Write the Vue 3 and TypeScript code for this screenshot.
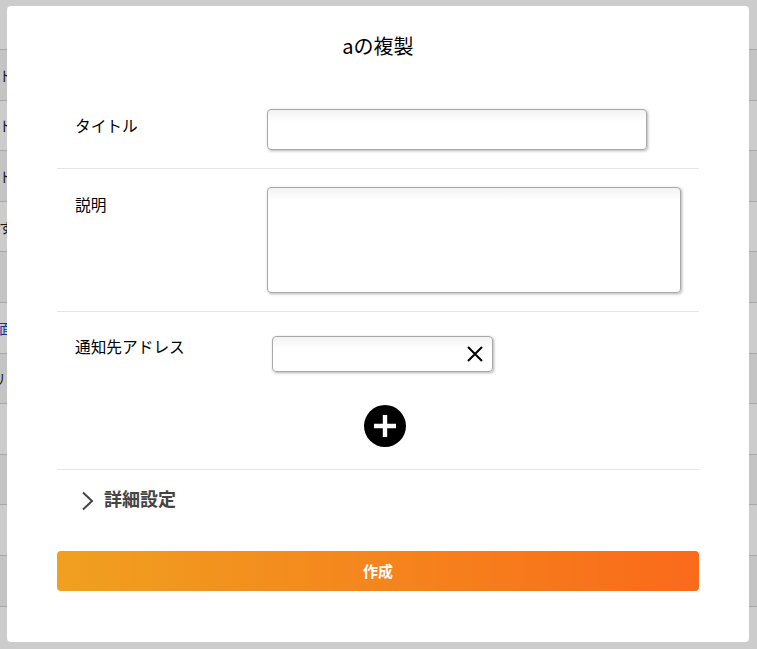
<script setup lang="ts">
const rows: { text: string; cls: string }[] = [
  { text: '', cls: '' },
  { text: 'ト', cls: 'dark' },
  { text: 'ト', cls: 'dark' },
  { text: 'ト', cls: 'dark' },
  { text: 'す', cls: 'dark' },
  { text: '', cls: '' },
  { text: '面', cls: 'blue' },
  { text: 'ル', cls: 'dark tail' },
  { text: '', cls: '' },
  { text: '', cls: '' },
  { text: '', cls: '' },
  { text: '', cls: '' },
  { text: '', cls: '' },
]
</script>

<template>
  <div class="page">
    <div class="list">
      <div v-for="(r, i) in rows" :key="i" class="list-row" :class="{ first: i === 0, odd: i % 2 === 1 }">
        <span class="frag" :class="r.cls">{{ r.text }}</span>
      </div>
    </div>
    <div class="scrim"></div>
    <div class="modal">
      <h1 class="title">aの複製</h1>
      <div class="row row-title">
        <label class="label">タイトル</label>
        <div class="field input-title"></div>
      </div>
      <div class="row row-desc">
        <label class="label">説明</label>
        <div class="field input-desc"></div>
      </div>
      <div class="row-notify">
        <div class="notify-line">
          <label class="label">通知先アドレス</label>
          <div class="field input-addr">
            <svg class="x" viewBox="0 0 16 16" width="16" height="16">
              <path d="M1 1 L15 15 M15 1 L1 15" stroke="#000" stroke-width="2" fill="none" />
            </svg>
          </div>
        </div>
        <div class="add-wrap">
          <svg class="add" viewBox="0 0 42 42" width="42" height="42">
            <circle cx="21" cy="21" r="21" fill="#000" />
            <path d="M21 10 V32 M10 21 H32" stroke="#fff" stroke-width="4.4" fill="none" />
          </svg>
        </div>
      </div>
      <div class="details">
        <svg class="chev" viewBox="0 0 14 20" width="14" height="20">
          <path d="M2 1.5 L11 10 L2 18.5" stroke="#444" stroke-width="2" fill="none" />
        </svg>
        <span class="details-text">詳細設定</span>
      </div>
      <button class="submit" type="button">作成</button>
    </div>
  </div>
</template>

<style>
html, body { margin: 0; padding: 0; }
</style>

<style scoped>
.page {
  position: relative;
  width: 757px;
  height: 649px;
  overflow: hidden;
  background: #fff;
  font-family: "Noto Sans CJK JP", "Noto Sans", sans-serif;
}
.list { display: flex; flex-direction: column; }
.list-row {
  height: 50.6px;
  box-sizing: border-box;
  border-bottom: 1px solid #d2d2d2;
  display: flex;
  align-items: center;
  white-space: nowrap;
  font-size: 14px;
}
.list-row.first { height: 50px; }
.list-row.odd { background: #f6f6f6; }
.frag { flex: none; margin-left: -1px; }
.frag.tail { margin-left: -2px; clip-path: inset(0 7px 0 0); }
.dark { color: #222; }
.blue { color: #1a3fc0; }
.scrim { position: absolute; inset: 0; background: rgba(0, 0, 0, 0.2); }
.modal {
  position: absolute;
  left: 7px;
  top: 6px;
  width: 742px;
  height: 636px;
  box-sizing: border-box;
  background: #fff;
  border-radius: 4px;
  padding: 0 50px;
  display: flex;
  flex-direction: column;
}
.title {
  margin: 0;
  height: 82px;
  padding-top: 25px;
  box-sizing: border-box;
  font-size: 20px;
  font-weight: 400;
  line-height: 30px;
  text-align: center;
  color: #000;
}
.row {
  display: flex;
  box-sizing: border-box;
  border-bottom: 1px solid #e5e5e5;
  padding-left: 18px;
}
.row-title { height: 81px; padding-top: 21px; }
.row-desc { height: 143px; padding-top: 18px; }
.label {
  width: 192px;
  flex: none;
  font-size: 15.7px;
  line-height: 24px;
  color: #000;
}
.row-title .label { padding-top: 5px; }
.row-desc .label { padding-top: 6px; }
.field {
  box-sizing: border-box;
  background: linear-gradient(#f2f2f2, #fff 12px);
  border: 1px solid #a8a8a8;
  border-radius: 4px;
  box-shadow: 1px 1px 3px rgba(0, 0, 0, 0.3);
}
.input-title { width: 380px; height: 41px; }
.input-desc { width: 414px; height: 106px; }
.row-notify {
  height: 158px;
  box-sizing: border-box;
  border-bottom: 1px solid #e5e5e5;
  padding-top: 24px;
  display: flex;
  flex-direction: column;
}
.notify-line { display: flex; padding-left: 18px; }
.notify-line .label { width: 197px; margin-top: -1px; }
.input-addr {
  width: 221px;
  height: 36px;
  display: flex;
  align-items: center;
  justify-content: flex-end;
  padding-right: 9px;
}
.add-wrap { display: flex; justify-content: center; padding: 33px 0 0 14px; }
.add { display: block; }
.details {
  height: 61px;
  display: flex;
  align-items: center;
  padding-left: 24px;
  box-sizing: border-box;
}
.chev { flex: none; margin-right: 9px; }
.details-text { font-size: 18px; font-weight: 700; color: #444; margin-bottom: 5px; }
.submit {
  margin-top: 20px;
  height: 40px;
  border: none;
  border-radius: 4px;
  width: 100%;
  background: linear-gradient(90deg, #f0a020, #fa6a1a);
  color: #fff;
  font-family: inherit;
  font-size: 15px;
  font-weight: 700;
  padding: 0 0 2px;
}
</style>
